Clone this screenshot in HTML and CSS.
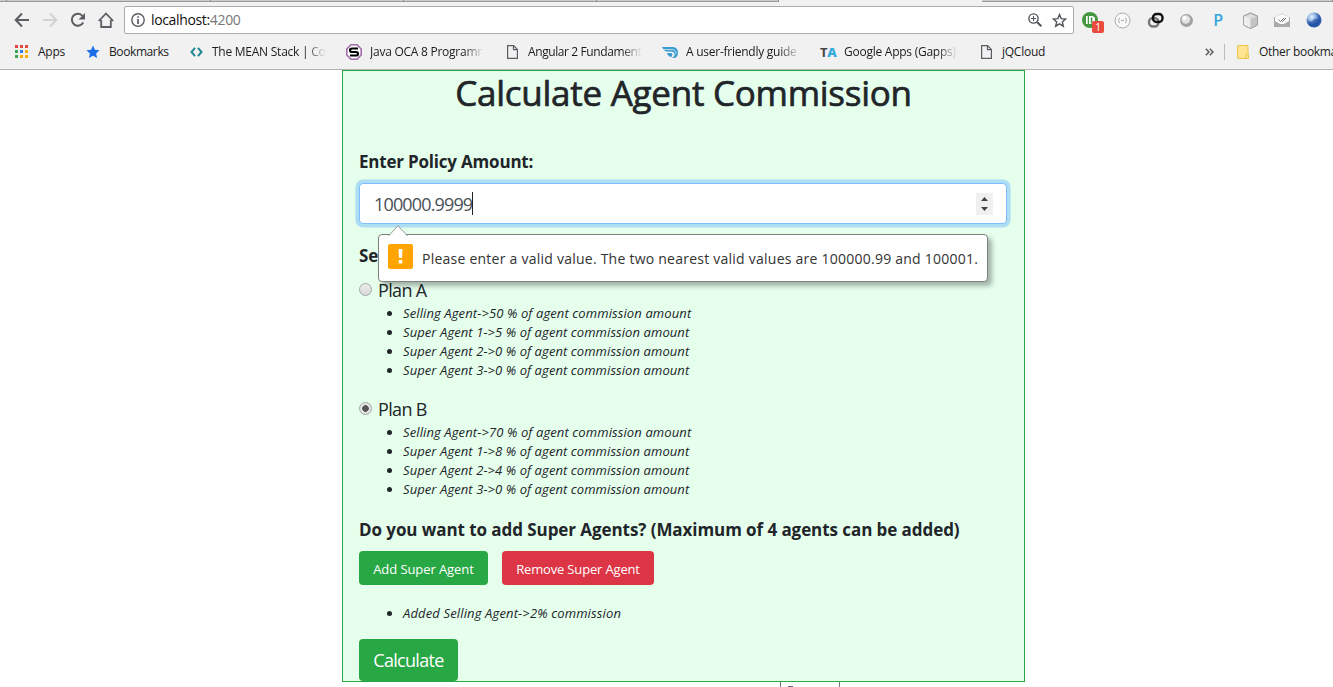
FILE: index.html
```html
<!DOCTYPE html>
<html lang="en">
<head>
<meta charset="utf-8">
<title>Calculate Agent Commission</title>
<link rel="stylesheet" href="styles.css">
</head>
<body>
<header class="browser">
  <div class="tabs"><i class="tab t1"></i><i class="tab t2"></i><i class="tab t3"></i><i class="tab t4"></i><i class="tab t5"></i><i class="gap"></i><i class="tab rest"></i></div>
  <div class="toolbar">
    <nav class="nav">
      <svg width="16" height="16" viewBox="0 0 16 16" fill="none" stroke="#5a5d61" stroke-width="2"><path d="M15 8H2M8 1.5L1.7 8 8 14.5"/></svg>
      <svg width="16" height="16" viewBox="0 0 16 16" fill="none" stroke="#d2d2d2" stroke-width="2"><path d="M1 8h13M8 1.5L14.3 8 8 14.5"/></svg>
      <svg width="16" height="16" viewBox="0 0 16 16"><path d="M13.200 10.500A6 6 0 1 1 12.600 4" fill="none" stroke="#5a5d61" stroke-width="2"/><path d="M15 1v6.400H8.600z" fill="#5a5d61"/></svg>
      <svg width="16" height="16" viewBox="0 0 16 16" fill="none" stroke="#5a5d61" stroke-width="1.8"><path d="M.8 9L8 1.500 15.200 9M3.200 8v7h9.600V8"/></svg>
    </nav>
    <div class="address">
      <svg width="14" height="14" viewBox="0 0 14 14"><circle cx="7" cy="7" r="6.200" fill="none" stroke="#5a5d61" stroke-width="1.4"/><path d="M6.200 3.200h1.700v1.600H6.200zM6.200 6h1.700v5H6.200z" fill="#5a5d61"/></svg>
      <span class="url">localhost:<b>4200</b></span>
      <svg class="magnify" width="14" height="14" viewBox="0 0 14 14" fill="none" stroke="#505357"><circle cx="5.500" cy="5.500" r="4.600" stroke-width="1.400"/><path d="M9 9l4.300 4.300" stroke-width="2"/><path d="M3 5.500h5M5.500 3v5"/></svg>
      <svg class="favstar" width="15" height="15" viewBox="0 0 15 15"><path d="M7.500 1.600l1.700 4 4.400.4-3.300 2.900 1 4.300-3.800-2.300-3.800 2.300 1-4.300L1.400 6l4.400-.4z" fill="none" stroke="#505357" stroke-width="1.400"/></svg>
    </div>
    <div class="extensions">
      <span class="ext"><svg width="17" height="17" viewBox="0 0 17 17"><circle cx="8" cy="8" r="8" fill="#43973f"/><path d="M4 4h1.700v8H4zM7 4h3a3.500 3.500 0 0 1 3 4v4H7z" fill="#fff"/><path d="M8.800 5.500h1.500v6H8.800z" fill="#43973f"/></svg><span class="badge">1</span></span>
      <svg width="17" height="17" viewBox="0 0 17 17" fill="none" stroke="#aaa"><circle cx="8.500" cy="8.500" r="7.500" fill="#f8f8f8"/><path d="M6 6q-1 0-1 1.200T4 8.500q1 0 1 1.200T6 11M11 6q1 0 1 1.200t1 1.300q-1 0-1 1.200T11 11M7 8.500h3"/></svg>
      <svg width="17" height="17" viewBox="0 0 17 17" fill="none"><rect x="2" y="6" width="9.500" height="8.500" rx="4" stroke="#777" stroke-width="2.400"/><path d="M9.500 2H12a3.500 3.500 0 0 1 3.500 3.500v1A3.500 3.500 0 0 1 12 10H9.500A3.500 3.500 0 0 1 6 6.500v-1A3.500 3.500 0 0 1 9.500 2z" stroke="#111" stroke-width="2.400"/></svg>
      <svg width="15" height="15" viewBox="0 0 15 15"><circle cx="7.500" cy="7.500" r="6.500" fill="#a2a2a2"/><circle cx="6.800" cy="6.500" r="4.300" fill="#e4e4e4"/><circle cx="5.500" cy="5" r="2" fill="#fff"/></svg>
      <span class="pletter">P</span>
      <svg width="17" height="17" viewBox="0 0 17 17" stroke="#999" stroke-width=".8"><path d="M8.500 1l7 3v9l-7 3.500-7-3.500V4z" fill="#ddd"/><path d="M1.500 4l7 3v9.500l-7-3.500z" fill="#eee" stroke="none"/><path d="M8.500 7l7-3v9l-7 3.500z" fill="#c4c4c4" stroke="none"/><path d="M8.500 1l7 3v9l-7 3.500-7-3.500V4z" fill="none"/></svg>
      <svg width="16" height="15" viewBox="0 0 16 15"><path d="M0 4.500L8 .5l8 4V14H0z" fill="#aaa"/><path d="M1 4L8 1l7 3v4l-5 3H6L1 8z" fill="#fafafa"/><path d="M4.500 6.500l2 2L10 5M8 8l.5.500L12 5" fill="none" stroke="#777"/></svg>
      <svg width="16" height="16" viewBox="0 0 16 16"><defs><radialGradient id="globe" cx=".35" cy=".3"><stop offset="0" stop-color="#e8f3ff"/><stop offset=".55" stop-color="#8fb4e4"/><stop offset="1" stop-color="#2f5cab"/></radialGradient></defs><circle cx="8" cy="8" r="7.500" fill="url(#globe)"/><path d="M2 8q3 3 5 0t7 0q-1 6-6 7-5-1-6-7z" fill="#1f4ba0" opacity=".55"/></svg>
    </div>
  </div>
  <div class="bookmarks">
    <span class="bm apps"><svg width="14" height="14" viewBox="0 0 14 14"><path d="M0 0h3v3H0zM5 0h3v3H5zM10 0h3v3H10z" fill="#e8453c"/><path d="M0 5h3v3H0zM0 10h3v3H0z" fill="#3aa757"/><path d="M5 5h3v3H5z" fill="#2a7de9"/><path d="M10 5h3v3H10zM5 10h3v3H5zM10 10h3v3H10z" fill="#f9ab00"/></svg><em>Apps</em></span>
    <span class="bm own"><svg width="14" height="14" viewBox="0 0 14 14"><path d="M7 .5l1.900 4.300 4.700.5-3.500 3.100 1 4.700L7 10.700l-4.100 2.400 1-4.700L.4 5.300l4.700-.5z" fill="#1a6fe8"/></svg><em>Bookmarks</em></span>
    <span class="bm mean"><svg width="13" height="10" viewBox="0 0 13 10" fill="none" stroke="#238592" stroke-width="2"><path d="M5 .8L1.500 5 5 9.200M8 .8L11.500 5 8 9.200"/></svg><em class="fade">The MEAN Stack | Co</em></span>
    <span class="bm java"><svg width="16" height="16" viewBox="0 0 16 16"><path d="M5 .8h6L15.200 5v6L11 15.200H5L.8 11V5z" fill="#fff" stroke="#a06aa8" stroke-width="1.600"/><path d="M12 4.500H6Q4 4.500 4 6.200T6 8h4q2 0 2 1.800t-2 1.700H4" fill="none" stroke="#000" stroke-width="2.200"/></svg><em class="fade">Java OCA 8 Programr</em></span>
    <span class="bm angular"><svg width="11" height="14" viewBox="0 0 11 14" fill="none" stroke="#5a5d61" stroke-width="1.200"><path d="M.6.600h6l3.800 3.800v9H.6zM6.500.6v4h4"/></svg><em class="fade tight">Angular 2 Fundament</em></span>
    <span class="bm guide"><svg width="16" height="11" viewBox="0 0 16 11"><path d="M0 0h10q6 0 6 5.500 0 4-3 5.500H9q4-1 3.500-4Q12 4.500 9 4.500H4Q1 3.500 0 0z" fill="#3b9ccf"/><path d="M1 2.500h9q4 0 4 4.500" fill="none" stroke="#d4eaf5" stroke-width=".8"/><path d="M5 6h4.500q2 2-.5 4Q6 9.500 5 6z" fill="#3b9ccf"/></svg><em class="fade">A user-friendly guide</em></span>
    <span class="bm gapps"><strong class="ta">T<b>A</b></strong><em class="fade">Google Apps (Gapps)</em></span>
    <span class="bm cloud"><svg width="11" height="14" viewBox="0 0 11 14" fill="none" stroke="#5a5d61" stroke-width="1.200"><path d="M.6.600h6l3.800 3.800v9H.6zM6.500.6v4h4"/></svg><em>jQCloud</em></span>
    <svg class="more" width="9" height="8" viewBox="0 0 9 8" fill="none" stroke="#5a5d61" stroke-width="1.500"><path d="M.8.800L4 4 .8 7.200M4.800.800L8 4 4.800 7.200"/></svg>
    <span class="other"><svg width="12" height="14" viewBox="0 0 12 14"><path d="M.5.500h10.500v9.500h.5v3.500H.5z" fill="#ffe592" stroke="#ecc54b"/><path d="M9 13V9.500h2" fill="none" stroke="#ecc54b"/></svg><em>Other bookmarks</em></span>
  </div>
</header>
<main class="panel">
  <h1 class="title">Calculate Agent Commission</h1>
  <div class="label amount-label"><span>Enter Policy Amount:</span></div>
  <div class="field">
    <span class="value">100000.9999</span><i class="caret"></i>
    <span class="spinner"><svg width="17" height="22" viewBox="0 0 17 22" fill="#444"><path d="M5 8l3.500-4L12 8zM5 14l3.500 4 3.500-4z"/></svg></span>
    <div class="tooltip">
      <svg class="arrow" width="20" height="11" viewBox="0 0 20 11"><path d="M.5 11L10 .8 19.500 11" fill="#fff" stroke="#999"/></svg>
      <svg width="25" height="25" viewBox="0 0 25 25"><rect width="25" height="25" rx="2" fill="#ffa400"/><path d="M10.500 5h4l-.5 9h-3zM10.700 16h3.600v3.500h-3.600z" fill="#fff"/></svg>
      <span class="message">Please enter a valid value. The two nearest valid values are 100000.99 and 100001.</span>
    </div>
  </div>
  <div class="label plan-label"><span>Se</span></div>
  <div class="plan"><i class="radio"></i><span>Plan A</span></div>
  <ul class="rates">
    <li><span>Selling Agent-&gt;50 % of agent commission amount</span></li>
    <li class="super"><span>Super Agent 1-&gt;5 % of agent commission amount</span></li>
    <li class="super"><span>Super Agent 2-&gt;0 % of agent commission amount</span></li>
    <li class="super"><span>Super Agent 3-&gt;0 % of agent commission amount</span></li>
  </ul>
  <div class="plan second"><i class="radio checked"></i><span>Plan B</span></div>
  <ul class="rates">
    <li><span>Selling Agent-&gt;70 % of agent commission amount</span></li>
    <li class="super"><span>Super Agent 1-&gt;8 % of agent commission amount</span></li>
    <li class="super"><span>Super Agent 2-&gt;4 % of agent commission amount</span></li>
    <li class="super"><span>Super Agent 3-&gt;0 % of agent commission amount</span></li>
  </ul>
  <div class="label agents-label"><span>Do you want to add Super Agents? (Maximum of 4 agents can be added)</span></div>
  <div class="buttons"><button class="btn add">Add Super Agent</button><button class="btn remove">Remove Super Agent</button></div>
  <ul class="rates added"><li><span>Added Selling Agent-&gt;2% commission</span></li></ul>
  <button class="btn calculate">Calculate</button>
</main>
<div class="popup"><i></i></div>
</body>
</html>
```
FILE: styles.css
```css
* { box-sizing: border-box; }
body { margin: 0; width: 1333px; height: 687px; overflow: hidden; background: #fff; font-family: "Open Sans", "Noto Sans", sans-serif; color: #212529; }
svg { display: block; flex: none; }
.browser { height: 70px; background: #f1f1f1; border-bottom: 1px solid #b4b4b4; }
.tabs { display: flex; height: 2px; }
.tab { background: #ccc; border-bottom: 1px solid #9a9a9a; border-right: 1px solid #8c8c8c; }
.t1 { width: 7px; } .t2 { width: 204px; } .t3 { width: 193px; } .t4 { width: 193px; } .t5 { width: 182px; }
.gap { width: 203px; } .rest { flex: 1; }
.toolbar { display: flex; height: 36px; padding: 4px 0 0 14px; }
.nav { display: flex; align-items: center; gap: 12px; height: 28px; width: 110px; }
.address { display: flex; align-items: center; width: 950px; height: 28px; padding: 0 6px; background: #fff; border: 1px solid #ababab; border-radius: 2px; }
.url { margin-left: 6px; font-size: 14px; line-height: 20px; color: #111; letter-spacing: -.35px; }
.url b { font-weight: 400; color: #777; }
.magnify { margin-left: auto; margin-right: 10px; }
.extensions { display: flex; align-items: center; height: 28px; padding-left: 8px; gap: 15.400px; }
.ext { position: relative; width: 17px; height: 17px; }
.badge { position: absolute; left: 10px; top: 9px; width: 12px; height: 12px; border-radius: 2px; background: #ea4b3c; color: #fff; font-size: 10px; line-height: 12px; text-align: center; }
.pletter { width: 17px; text-align: center; font-weight: 600; font-size: 16px; color: #35a5dc; }
.bookmarks { display: flex; height: 28px; padding-left: 15px; align-items: center; font-size: 12px; line-height: 18px; color: #1c1c1c; letter-spacing: -.25px; }
.bookmarks em { font-style: normal; white-space: nowrap; }
.bm { display: flex; align-items: center; flex: none; }
.apps { width: 71px; gap: 9px; }
.own { width: 104px; gap: 9px; letter-spacing: -.4px; }
.mean { width: 156px; gap: 9px; }
.java { width: 161px; gap: 8px; }
.angular { width: 155px; gap: 10px; }
.guide { width: 158px; gap: 8px; }
.gapps { width: 161px; gap: 8px; }
.cloud { width: 224px; gap: 10px; }
.fade { width: 114px; -webkit-mask-image: linear-gradient(90deg, #000 82%, transparent); mask-image: linear-gradient(90deg, #000 82%, transparent); }
.tight { letter-spacing: -.4px; }
.ta { display: block; width: 16px; font-size: 13px; color: #444; letter-spacing: -.2px; }
.ta b { color: #35aade; }
.more { margin-right: 9px; }
.other { display: flex; align-items: center; gap: 10px; height: 16px; margin-left: 1px; padding-left: 12px; border-left: 1px solid #bbb; }
.other em { letter-spacing: -.3px; }
.panel { width: 683px; height: 612px; margin-left: 342px; padding: 0 16px; border: 1px solid #28a745; background: #e6ffed; }
.title { margin: 0; height: 44px; line-height: 44px; font-size: 35px; font-weight: 500; letter-spacing: -.26px; -webkit-text-stroke: .7px #212529; text-align: center; white-space: nowrap; }
.label { height: 26px; line-height: 26px; font-size: 17px; font-weight: 700; letter-spacing: -.07px; white-space: nowrap; }
.amount-label { margin-top: 34px; letter-spacing: -.2px; }
.field { position: relative; display: flex; align-items: center; width: 648px; height: 41px; margin-top: 8px; padding: 0 15px 0 14px; border: 1px solid #80bdff; border-radius: 4px; background: #fff; box-shadow: 0 0 0 3.600px #addef4; font-size: 18px; color: #495057; }
.value { letter-spacing: -.85px; }
.caret { width: 1px; height: 23px; background: #222; }
.spinner { margin-left: auto; margin-right: -2px; background: #f0f0f0; }
.tooltip { position: absolute; left: 18px; top: 50px; z-index: 2; display: flex; align-items: center; width: 610px; height: 48px; padding: 0 9px; border: 1px solid #808080; border-radius: 4px; background: #fff; box-shadow: 4px 4px 5px rgba(0, 0, 0, .3); color: #333; }
.arrow { position: absolute; left: 9px; top: -10px; }
.tooltip > svg:not(.arrow) { margin-top: -3px; }
.message { margin-left: 9px; font-size: 14px; letter-spacing: .24px; white-space: nowrap; }
.plan-label { margin-top: 19px; }
.plan { display: flex; align-items: center; height: 26px; margin-top: 9px; font-size: 18px; letter-spacing: -.65px; }
.plan span { margin-top: -2px; }
.second { margin-top: 17px; }
.radio { width: 13px; height: 13px; margin: -3px 6px 0 0; border: 1px solid #a5a5a5; border-radius: 50%; background: linear-gradient(#ececec, #d8d8d8); }
.checked { background: radial-gradient(circle, #555 0 3px, #e4e4e4 3.600px); }
.rates { margin: 0; padding-left: 44px; font-size: 13px; line-height: 19px; font-style: italic; letter-spacing: .11px; white-space: nowrap; list-style: none; }
.rates li { display: flex; align-items: center; height: 19px; }
.rates .super { letter-spacing: .08px; }
.rates li::before { content: ""; width: 5px; height: 5px; margin: 0 11px 0 -16px; border-radius: 50%; background: #212529; }
.agents-label { margin-top: 18px; }
.buttons { display: flex; gap: 14px; margin-top: 8px; }
.btn { height: 34px; padding: 0; border: 0; border-radius: 4px; background: #28a745; color: #fff; font-family: inherit; font-size: 13px; white-space: nowrap; }
.add { width: 129px; padding-top: 2px; letter-spacing: -.08px; }
.remove { width: 152px; padding-top: 2px; letter-spacing: -.16px; background: #dc3545; }
.added { margin-top: 19px; letter-spacing: .14px; }
.calculate { display: block; width: 99px; height: 42px; margin-top: 16px; font-size: 18px; letter-spacing: -.7px; }
.popup { width: 60px; height: 5px; margin-left: 780px; border: 1px solid #777; border-width: 0 1px; }
.popup i { display: block; width: 5px; height: 1px; margin-left: 7px; position: relative; top: 4px; background: #666; }
```
